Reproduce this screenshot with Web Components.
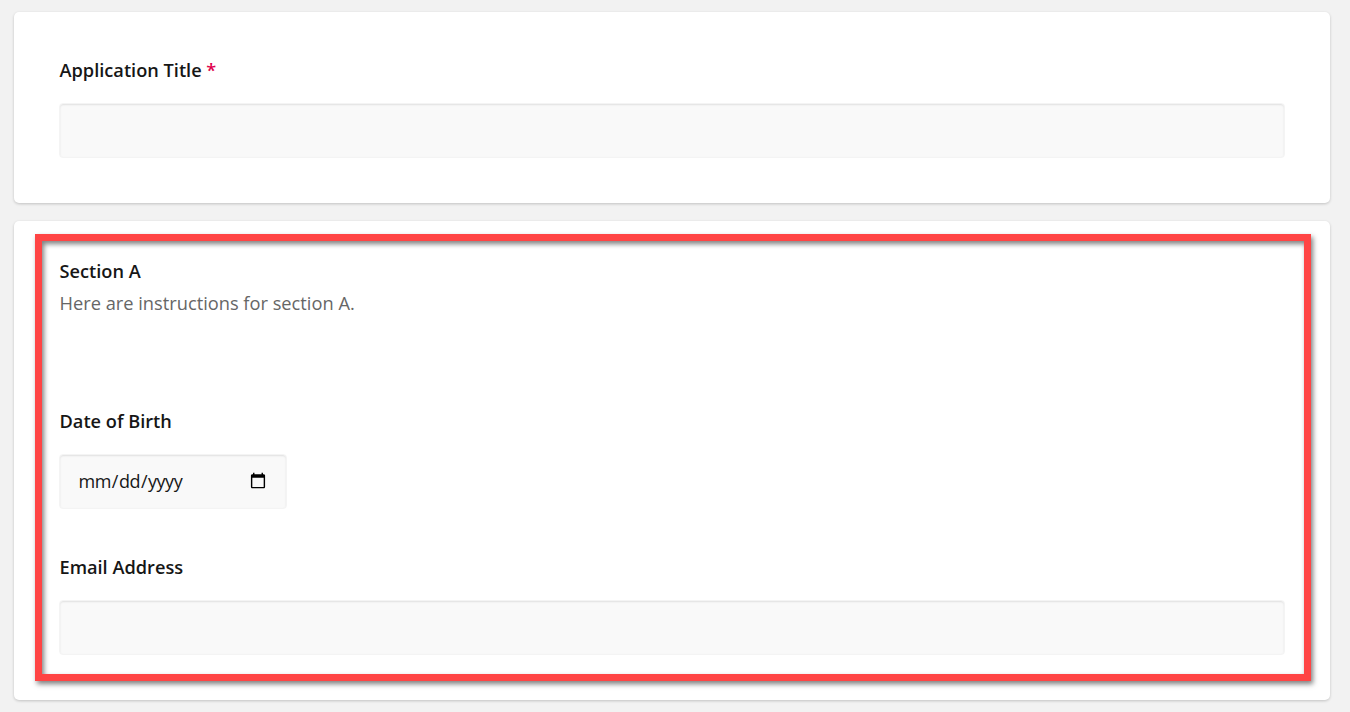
<!DOCTYPE html>
<html lang="en">
<head>
<meta charset="utf-8">
<title>Application form</title>
<style>
  html, body { margin: 0; height: 712px; overflow: hidden; background: #f2f2f2; }
  body { font-family: "Open Sans", sans-serif; color: #161616; }
</style>
</head>
<body>
<form-page>
  <form-card style="--pad-top: 45.2px">
    <form-field label="Application Title" required></form-field>
  </form-card>
  <form-card style="--pad-top: 37.3px" highlighted>
    <form-section heading="Section A">Here are instructions for section A.</form-section>
    <form-field label="Date of Birth" type="date"></form-field>
    <form-field label="Email Address"></form-field>
  </form-card>
</form-page>

<script>
class FormPage extends HTMLElement {
  constructor() {
    super();
    this.attachShadow({ mode: 'open' });
    this.shadowRoot.innerHTML = `
      <style>
        :host { display: flex; flex-direction: column; gap: 18.2px; padding: 12px 20px 12px 14px; }
      </style>
      <slot></slot>
    `;
  }
}

class FormCard extends HTMLElement {
  constructor() {
    super();
    this.attachShadow({ mode: 'open' });
    this.shadowRoot.innerHTML = `
      <style>
        :host {
          display: flex;
          flex-direction: column;
          gap: 45.5px;
          position: relative;
          padding: var(--pad-top, 45px) 45px 45px;
          background: #fff;
          border-radius: 5px;
          box-shadow: 0 1px 3px rgba(0, 0, 0, .2);
        }
        /* red annotation frame drawn over the card */
        .frame {
          display: none;
          position: absolute;
          left: 21px;
          right: 19px;
          top: 13px;
          bottom: 19px;
          border: 7px solid #ff4444;
          box-shadow: 2px 3px 5px rgba(0, 0, 0, .5), inset 2px 3px 5px rgba(0, 0, 0, .5);
          pointer-events: none;
        }
        :host([highlighted]) .frame { display: block; }
      </style>
      <slot></slot>
      <div class="frame"></div>
    `;
  }
}

class FormSection extends HTMLElement {
  constructor() {
    super();
    this.attachShadow({ mode: 'open' });
    this.shadowRoot.innerHTML = `
      <style>
        :host { display: block; padding: 0 0 46.7px .5px; font-size: 18.2px; line-height: 27.3px; }
        .heading { font-weight: 600; margin-bottom: 3.5px; }
        .text { color: #666; font-size: 18.25px; }
      </style>
      <div class="heading"></div>
      <div class="text"><slot></slot></div>
    `;
    this.shadowRoot.querySelector('.heading').textContent = this.getAttribute('heading');
  }
}

class FormField extends HTMLElement {
  constructor() {
    super();
    this.attachShadow({ mode: 'open' });
    this.shadowRoot.innerHTML = `
      <style>
        :host { display: flex; flex-direction: column; gap: 18.2px; }
        label { padding-left: .5px; font-size: 18.2px; line-height: 1.5; font-weight: 600; }
        .req { color: #e0004d; }
        input {
          box-sizing: border-box;
          width: 100%;
          height: 55px;
          margin: 0;
          padding: 0 17.5px;
          font: 400 18px "Open Sans", sans-serif;
          letter-spacing: -.5px;
          color: #161616;
          background: #f9f9f9;
          border: 1px solid #f4f4f4;
          border-radius: 4px;
          box-shadow: inset 0 1px 2px rgba(0, 0, 0, .1);
          outline: none;
        }
        input[type=date] { width: 228px; }
      </style>
      <label for="control"><span class="name"></span><span class="req"></span></label>
      <input id="control">
    `;
    this.shadowRoot.querySelector('.name').textContent = this.getAttribute('label');
    if (this.hasAttribute('required')) {
      this.shadowRoot.querySelector('.req').textContent = ' *';
    }
    // Falls back to a plain text box when no type is given
    this.shadowRoot.querySelector('input').type = this.getAttribute('type') || 'text';
  }
}

customElements.define('form-page', FormPage);
customElements.define('form-card', FormCard);
customElements.define('form-section', FormSection);
customElements.define('form-field', FormField);
</script>
</body>
</html>
